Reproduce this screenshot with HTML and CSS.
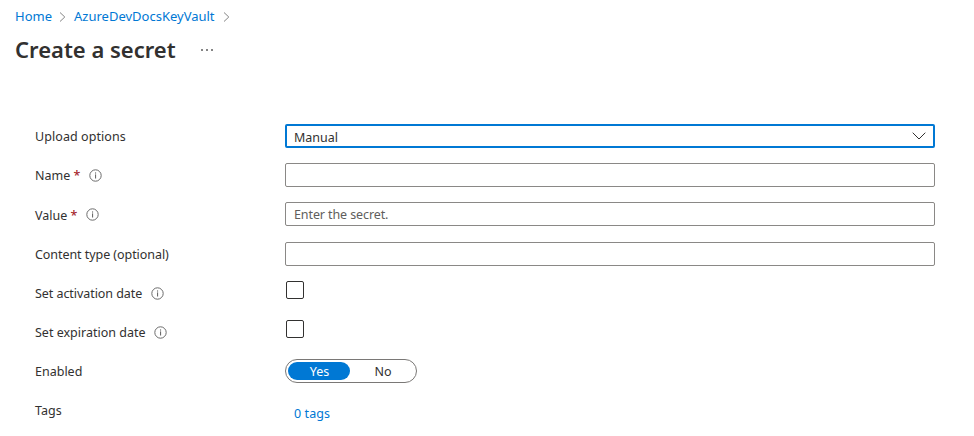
FILE: index.html
```html
<!DOCTYPE html>
<html lang="en">
<head>
<meta charset="utf-8">
<title>Create a secret</title>
<link rel="stylesheet" href="styles.css">
</head>
<body>
<svg width="0" height="0" class="defs" aria-hidden="true">
  <symbol id="info" viewBox="0 0 13 13">
    <circle cx="6.5" cy="6.5" r="5.7" fill="none" stroke="#6b6b6b" stroke-width="1"/>
    <rect x="6" y="5.4" width="1.1" height="4.1" fill="#6b6b6b"/>
    <rect x="6" y="3.4" width="1.1" height="1.2" fill="#6b6b6b"/>
  </symbol>
  <symbol id="sep" viewBox="0 0 7 12">
    <path d="M1 1.5 5.8 6 1 10.5" fill="none" stroke="#858585" stroke-width="1"/>
  </symbol>
</svg>
<nav class="breadcrumb">
  <a class="home">Home</a><svg class="sep"><use href="#sep"/></svg><a class="vault">AzureDevDocsKeyVault</a><svg class="sep"><use href="#sep"/></svg>
</nav>
<header class="heading">
  <h1>Create a secret</h1>
  <svg class="more" viewBox="0 0 12 2"><path d="M0 0h2v2H0zM5 0h2v2H5zM10 0h2v2h-2z" fill="#858585"/></svg>
</header>
<main class="form">
  <div class="row"><label class="wide">Upload options</label>
    <div class="field select"><span>Manual</span><svg class="chevron" viewBox="0 0 14 8"><path d="M.7 .7 7 7 13.3 .7" fill="none" stroke="#323130" stroke-width="1"/></svg></div></div>
  <div class="row"><label>Name <b>*</b></label><svg class="info"><use href="#info"/></svg><div class="field"></div></div>
  <div class="row tall"><label>Value <b>*</b></label><svg class="info"><use href="#info"/></svg><div class="field hint"><span>Enter the secret.</span></div></div>
  <div class="row"><label class="tight">Content type (optional)</label><div class="field"></div></div>
  <div class="row"><label class="tight">Set activation date</label><svg class="info"><use href="#info"/></svg><div class="check"></div></div>
  <div class="row"><label>Set expiration date</label><svg class="info"><use href="#info"/></svg><div class="check"></div></div>
  <div class="row"><label>Enabled</label><div class="toggle"><span class="on">Yes</span><span>No</span></div></div>
  <div class="row"><label>Tags</label><a class="tags">0 tags</a></div>
</main>
</body>
</html>
```
FILE: styles.css
```css
* { box-sizing: border-box; }
body {
  margin: 0;
  height: 436px;
  overflow: hidden;
  background: #fff;
  color: #323130;
  font: 12.5px/26px "Noto Sans", "Open Sans", sans-serif;
}
svg { flex: none; }
.defs { display: none; }
a { color: #0078d4; }
.breadcrumb {
  display: flex;
  align-items: center;
  height: 32px;
  padding-left: 15px;
  font-size: 13px;
}
.breadcrumb a { margin-top: -1px; }
.home { width: 44px; }
.vault { width: 149px; }
.sep { width: 7px; height: 12px; margin-top: 2px; }
.sep + .vault { margin-left: 8px; }
.heading {
  display: flex;
  align-items: center;
  height: 36px;
  padding-left: 15px;
}
h1 {
  width: 187px;
  margin: -2px 0 0;
  font-size: 22px;
  font-weight: 600;
  line-height: 36px;
  white-space: nowrap;
}
.more { width: 12px; height: 2px; margin-left: -1px; }
.form { padding: 56px 0 0 35px; }
.row {
  display: grid;
  grid-template-columns: max-content 1fr 650px;
  align-items: start;
  width: 900px;
  height: 39px;
}
.row.tall { height: 40px; }
.tall label { line-height: 28px; }
label { white-space: nowrap; }
label b { color: #a4262c; font-weight: 500; }
.wide { letter-spacing: .07px; }
.tight { letter-spacing: -.06px; }
.info { width: 13px; height: 13px; margin: 6px 0 0 9px; }
.field, .check, .toggle, .tags { grid-column: 3; }
.field {
  display: flex;
  align-items: center;
  height: 24px;
  padding: 2px 8px 0;
  border: 1px solid #8a8886;
  border-radius: 2px;
}
.select {
  justify-content: space-between;
  padding: 3px 7px 0;
  border: 2px solid #0078d4;
}
.chevron { width: 14px; height: 8px; margin-top: -3px; }
.hint { color: #605e5c; letter-spacing: -.1px; }
.check {
  width: 18px;
  height: 18px;
  margin-left: 1px;
  border: 1px solid #323130;
  border-radius: 2px;
}
.toggle {
  display: flex;
  width: 132px;
  height: 24px;
  padding: 2px;
  border: 1px solid #7a7876;
  border-radius: 12px;
  line-height: 20px;
  text-align: center;
}
.toggle span { flex: none; width: 66px; height: 18px; }
.toggle .on { width: 62px; padding-left: 1px; border-radius: 9px; background: #0078d4; color: #fff; }
.tags { padding: 3px 0 0 9px; letter-spacing: .1px; }
```
